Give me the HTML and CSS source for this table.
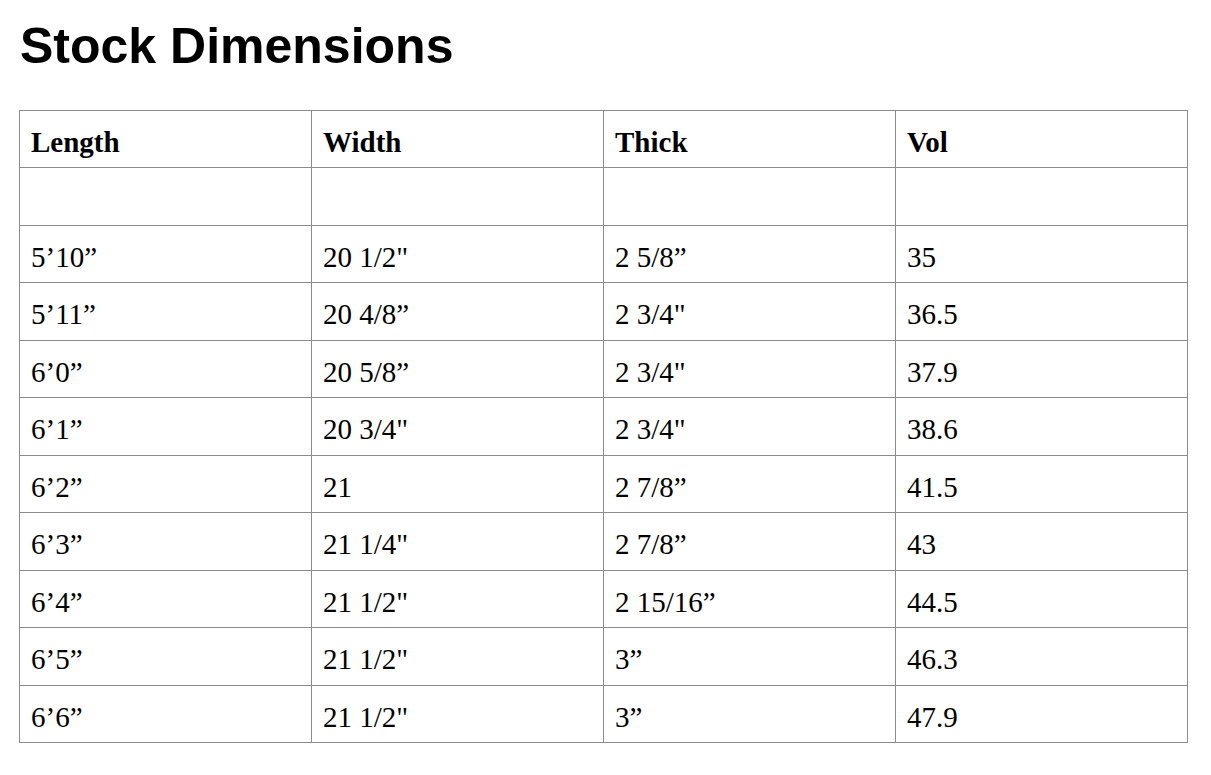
FILE: index.html
```html
<!DOCTYPE html>
<html>
<head>
<meta charset="utf-8">
<title>Stock Dimensions</title>
<link rel="stylesheet" href="styles.css">
</head>
<body>
<div class="page">
  <h1 class="title">Stock Dimensions</h1>
  <table class="dims">
    <thead>
      <tr><th>Length</th><th>Width</th><th>Thick</th><th>Vol</th></tr>
    </thead>
    <tbody>
      <tr><td></td><td></td><td></td><td></td></tr>
      <tr><td>5’10”</td><td>20 1/2"</td><td>2 5/8”</td><td>35</td></tr>
      <tr><td>5’11”</td><td>20 4/8”</td><td>2 3/4"</td><td>36.5</td></tr>
      <tr><td>6’0”</td><td>20 5/8”</td><td>2 3/4"</td><td>37.9</td></tr>
      <tr><td>6’1”</td><td>20 3/4"</td><td>2 3/4"</td><td>38.6</td></tr>
      <tr><td>6’2”</td><td>21</td><td>2 7/8”</td><td>41.5</td></tr>
      <tr><td>6’3”</td><td>21 1/4"</td><td>2 7/8”</td><td>43</td></tr>
      <tr><td>6’4”</td><td>21 1/2"</td><td>2 15/16”</td><td>44.5</td></tr>
      <tr><td>6’5”</td><td>21 1/2"</td><td>3”</td><td>46.3</td></tr>
      <tr><td>6’6”</td><td>21 1/2"</td><td>3”</td><td>47.9</td></tr>
    </tbody>
  </table>
</div>
</body>
</html>
```
FILE: styles.css
```css
html, body {
  margin: 0;
  padding: 0;
  background: #ffffff;
}
.page {
  padding: 19px 20px 0 19px;
}
.title {
  margin: 0 0 37px 1px;
  font-family: "Liberation Sans", Arial, sans-serif;
  font-weight: bold;
  font-size: 50px;
  line-height: 54px;
  color: #000;
}
.dims {
  width: 1169px;
  table-layout: fixed;
  border-collapse: collapse;
  font-family: "Liberation Serif", "Times New Roman", serif;
  font-size: 29px;
  color: #000;
}
.dims th,
.dims td {
  border: 1px solid #8c8c8c;
  padding: 15px 11px 8px 11px;
  line-height: 33.45px;
  height: 33.45px;
  text-align: left;
  vertical-align: top;
  white-space: nowrap;
}
.dims th {
  font-weight: bold;
}
```
